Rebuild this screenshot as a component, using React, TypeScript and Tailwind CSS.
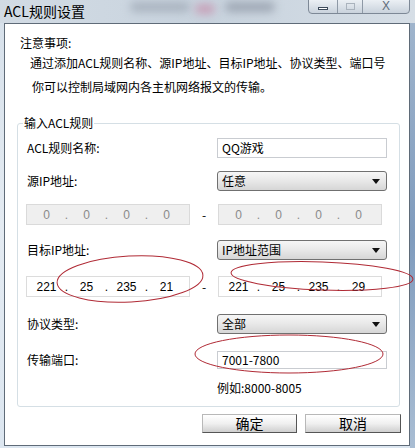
import React from "react";

const cjk = { fontFamily: '"Noto Sans CJK SC", "Liberation Sans", sans-serif' };
const num = { fontFamily: '"Liberation Sans", "Noto Sans CJK SC", sans-serif' };

function Select({ value }: { value: string }) {
  return (
    <div className="w-[170px] h-[20px] flex items-center justify-between rounded-[3px] border border-[#707070] bg-gradient-to-b from-[#f6f6f6] via-[#e8e8e8] to-[#d6d6d6] pl-[4px] pr-[6px]">
      <span className="text-[12px] leading-[16px] text-black">{value}</span>
      <svg width="8" height="5" viewBox="0 0 8 5">
        <path d="M0 0 H8 L4 5 Z" fill="#111" />
      </svg>
    </div>
  );
}

function TextInput({ value, h }: { value: string; h: string }) {
  return (
    <div className={`w-[170px] ${h} flex items-center border border-[#c9ccd1] bg-white pl-[4px]`}>
      <span className="text-[12px] leading-[16px] text-black">{value}</span>
    </div>
  );
}

function IpBox({ parts, disabled }: { parts: string[]; disabled?: boolean }) {
  return (
    <div
      className={`w-[164px] h-[21px] flex items-center pl-[2px] border ${
        disabled ? "border-[#dadada] bg-[#efefef] text-[#8a8a8a]" : "border-[#dcdcdc] bg-white text-black"
      }`}
      style={num}
    >
      {parts.map((p, i) => (
        <React.Fragment key={i}>
          <span className="w-[35px] text-center text-[12px] leading-[14px]">{p}</span>
          {i < 3 && <span className="w-[5px] text-center text-[12px] leading-[14px]">.</span>}
        </React.Fragment>
      ))}
    </div>
  );
}

function Row({ label, children, mt }: { label: string; children: React.ReactNode; mt: string }) {
  return (
    <div className={`flex items-center ${mt}`}>
      <div className="w-[199px] pl-[9px] text-[12px] leading-[16px] text-black">{label}</div>
      {children}
    </div>
  );
}

function IpRow({ mt, left, right, disabled }: { mt: string; left: string[]; right: string[]; disabled?: boolean }) {
  return (
    <div className={`flex items-center pl-[8px] ${mt}`}>
      <IpBox parts={left} disabled={disabled} />
      <div className="w-[28px] text-center text-[12px] leading-[14px] text-black">-</div>
      <IpBox parts={right} disabled={disabled} />
    </div>
  );
}

function WinButton({ label, w }: { label: string; w: string }) {
  return (
    <button
      className={`${w} h-[19px] border border-[#b8b8b8] border-r-[#555] border-b-[#555] bg-gradient-to-b from-white via-[#f0f0f0] to-[#cfcfcf] text-[14px] leading-[17px] text-black`}
    >
      {label}
    </button>
  );
}

export default function App() {
  return (
    <div
      className="relative w-[415px] h-[448px] overflow-hidden bg-gradient-to-b from-[#d6e0ea] via-[#e4ebf2] to-[#dce6f0]"
      style={cjk}
    >
      {/* Title bar */}
      <div className="relative h-[23px] bg-gradient-to-r from-[#d2dbe4] via-[#c8d3de] to-[#d6dee6]">
        <div className="absolute left-[130px] top-[2px] w-[60px] h-[10px] rounded-full bg-[#a9b3bf] blur-[4px]" />
        <div className="absolute left-[225px] top-[2px] w-[50px] h-[10px] rounded-full bg-[#9ea7b4] blur-[4px]" />
        <div className="absolute left-[195px] top-[4px] w-[20px] h-[10px] rounded-full bg-[#c7a0b8] blur-[4px]" />
        <div className="absolute left-[4px] top-[1px] text-[14px] leading-[20px] text-black">ACL规则设置</div>
        <div className="absolute right-[5px] top-[-2px] flex h-[16px] rounded-b-[4px] border border-[#7d8896] bg-gradient-to-b from-[#eef2f6] to-[#c9d2dc] overflow-hidden">
          <div className="w-[29px] flex items-center justify-center border-r border-[#8e99a6]">
            <div className="w-[10px] h-[3px] border border-[#3c4a5a] bg-white mt-[4px]" />
          </div>
          <div className="w-[25px] flex items-center justify-center border-r border-[#8e99a6]">
            <div className="w-[9px] h-[7px] border border-[#aab3bd]" />
          </div>
          <div className="w-[46px] flex items-center justify-center text-[12px] leading-[12px] text-[#5f6c7a]" style={num}>
            X
          </div>
        </div>
      </div>

      {/* Client area */}
      <div className="ml-[4px] w-[406px] h-[423px] border border-[#5f6b78] bg-white">
        <div className="pt-[11px] pl-[15px] text-[12px] leading-[16px] text-black">注意事项:</div>
        <div className="mt-[4px] pl-[25px] text-[12px] leading-[16px] text-black">
          通过添加ACL规则名称、源IP地址、目标IP地址、协议类型、端口号
        </div>
        <div className="mt-[8px] pl-[27px] text-[12px] leading-[16px] text-black">
          你可以控制局域网内各主机网络报文的传输。
        </div>

        {/* Group box */}
        <div className="relative mt-[28px] ml-[12px] w-[383px] rounded-[3px] border border-[#d5dfe5] pt-[14px] pb-[10px]">
          <div className="absolute -top-[9px] left-[5px] bg-white px-[1px] text-[12px] leading-[16px] text-black">
            输入ACL规则
          </div>

          <Row label="ACL规则名称:" mt="mt-0">
            <TextInput value="QQ游戏" h="h-[20px]" />
          </Row>
          <Row label="源IP地址:" mt="mt-[13px]">
            <Select value="任意" />
          </Row>
          <IpRow mt="mt-[13px]" left={["0", "0", "0", "0"]} right={["0", "0", "0", "0"]} disabled />
          <Row label="目标IP地址:" mt="mt-[15px]">
            <Select value="IP地址范围" />
          </Row>
          <IpRow mt="mt-[16px]" left={["221", "25", "235", "21"]} right={["221", "25", "235", "29"]} />
          <Row label="协议类型:" mt="mt-[17px]">
            <Select value="全部" />
          </Row>
          <Row label="传输端口:" mt="mt-[17px]">
            <TextInput value="7001-7800" h="h-[18px]" />
          </Row>
          <div className="mt-[11px] pl-[199px] text-[12px] leading-[16px] text-black">例如:8000-8005</div>
        </div>

        {/* Buttons */}
        <div className="mt-[7px] flex justify-end gap-[8px] pr-[8px]">
          <WinButton label="确定" w="w-[95px]" />
          <WinButton label="取消" w="w-[96px]" />
        </div>
      </div>

      {/* Right glass stripe */}
      <div className="absolute right-0 top-[23px] w-[5px] h-[425px] bg-gradient-to-b from-[#9fb4cc] via-[#7f9bbd] to-[#a9bdd3]" />

      {/* Red annotation ellipses */}
      <svg className="absolute inset-0 pointer-events-none" width="415" height="448" viewBox="0 0 415 448">
        <ellipse cx="130" cy="279" rx="73" ry="23" fill="none" stroke="#b02a35" strokeWidth="1" transform="rotate(-3 130 279)" />
        <ellipse cx="322" cy="276" rx="91" ry="14" fill="none" stroke="#b02a35" strokeWidth="1" transform="rotate(2 322 276)" />
        <ellipse cx="289" cy="354" rx="94" ry="19" fill="none" stroke="#b02a35" strokeWidth="1" />
      </svg>
    </div>
  );
}
